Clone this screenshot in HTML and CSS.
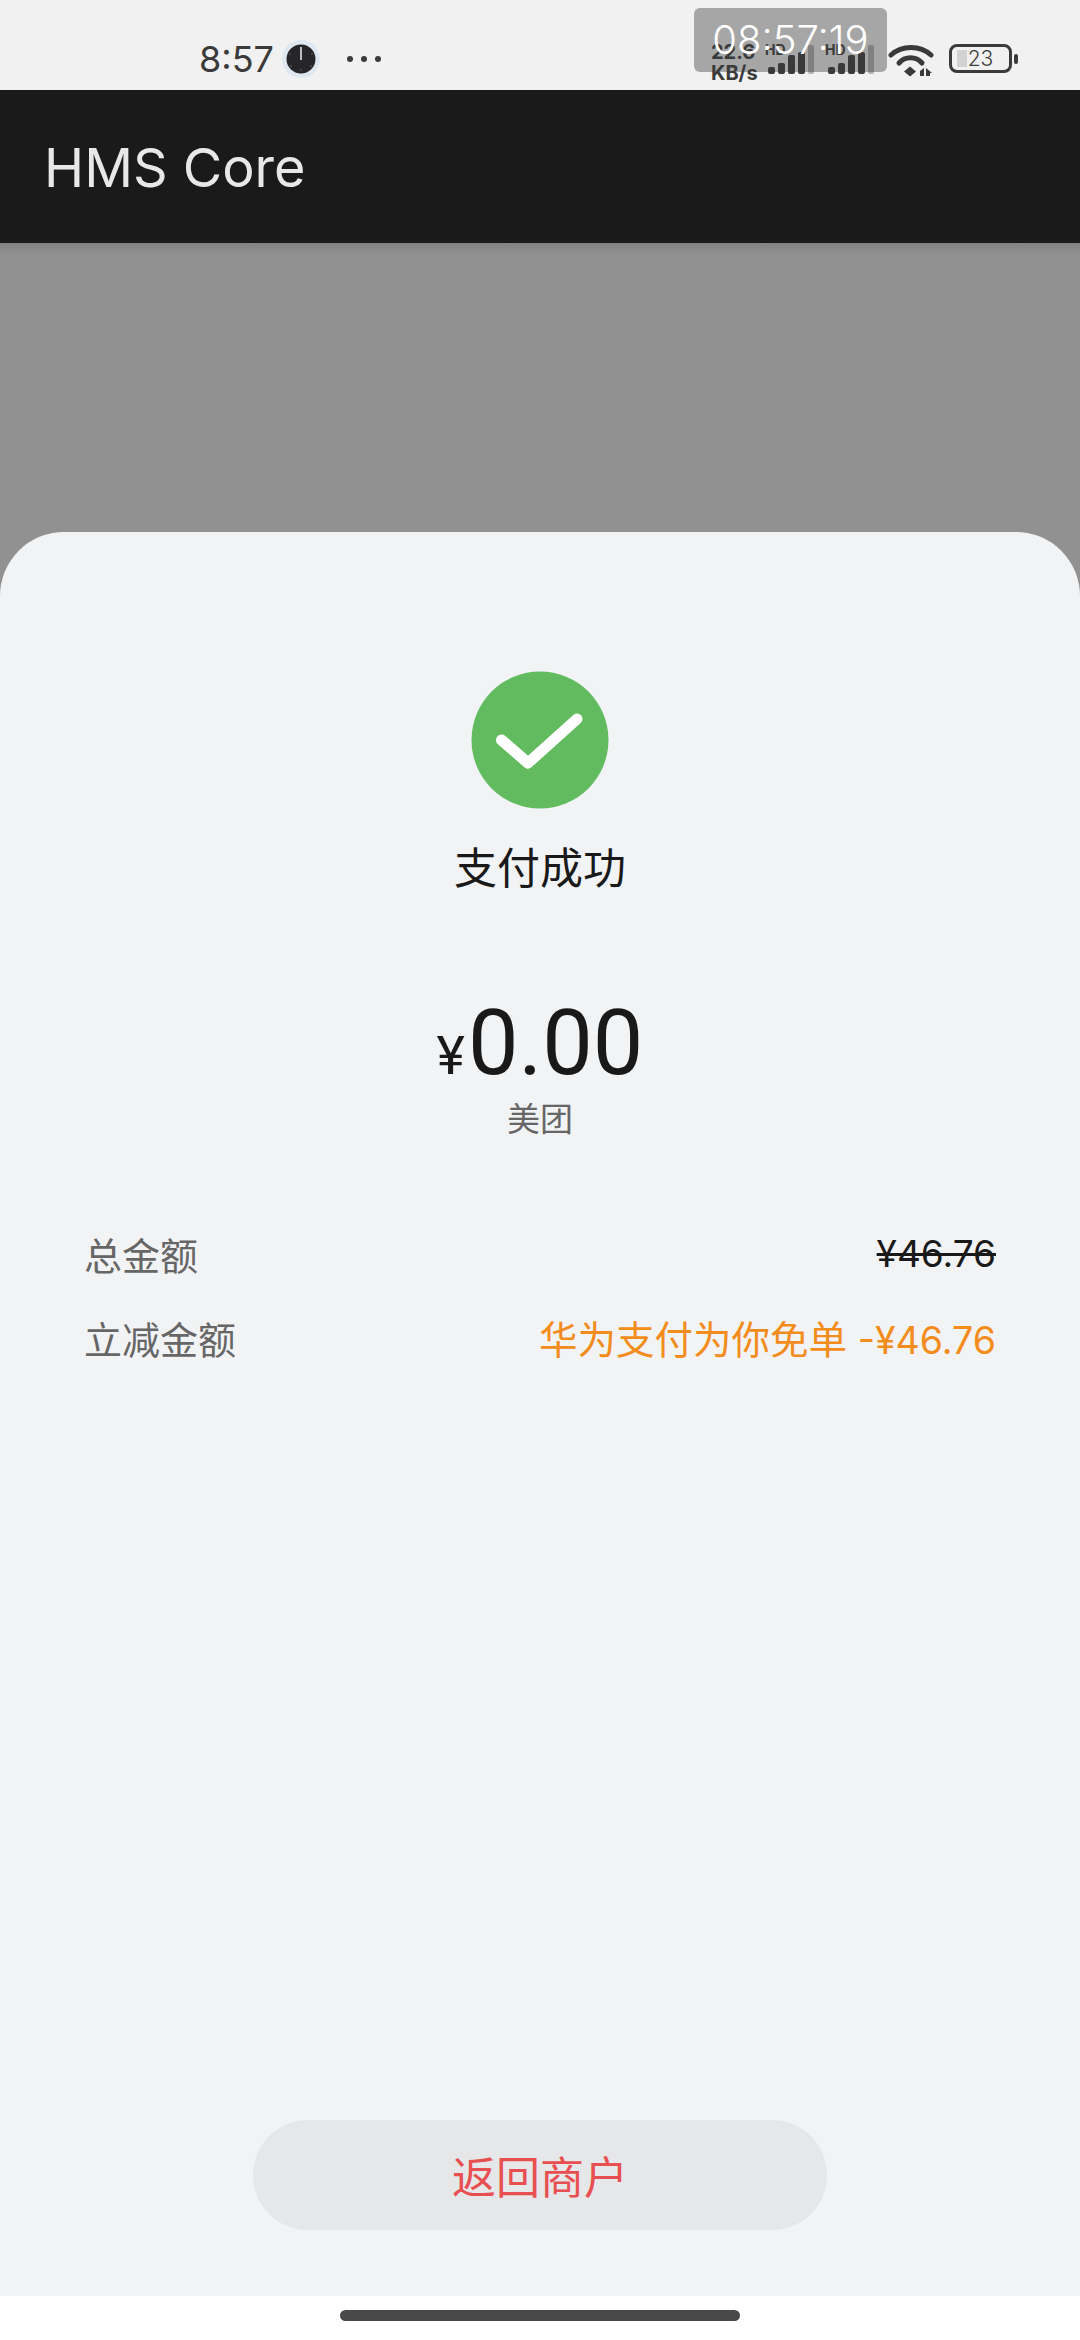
FILE: index.html
```html
<!DOCTYPE html>
<html lang="zh-CN">
<head>
    <meta charset="UTF-8">
    <meta name="viewport" content="width=device-width, initial-scale=1.0">
    <title>HMS Core</title>
    <link rel="stylesheet" href="styles.css">
</head>
<body>
    <div class="screen">
        <!-- Status bar -->
        <div class="status-bar">
            <div class="time-box"></div>
            <div class="status-left">
                <span class="status-time">8:57</span>
                <span class="clock-app">
                    <svg width="38" height="38" viewBox="0 0 38 38">
                        <circle cx="19" cy="19" r="14.5" fill="#26262a"/>
                        <rect x="18" y="7" width="2" height="13" fill="#bdbdbd"/>
                        <circle cx="19" cy="30" r="0.7" fill="#777"/>
                        <circle cx="9" cy="26" r="0.7" fill="#777"/>
                        <circle cx="29" cy="26" r="0.7" fill="#777"/>
                        <circle cx="8" cy="14" r="0.7" fill="#777"/>
                        <circle cx="30" cy="14" r="0.7" fill="#777"/>
                    </svg>
                </span>
                <span class="status-dots"><i></i><i></i><i></i></span>
            </div>
            <div class="status-right">
                <span class="net-speed">22.6<br>KB/s</span>
                <span class="signal">
                    <span class="hd">HD</span>
                    <svg width="46" height="30" viewBox="0 0 46 30">
                        <rect x="0" y="22" width="7" height="7" rx="2" fill="#3a3a3a"/>
                        <rect x="10" y="18" width="7" height="11" rx="2" fill="#3a3a3a"/>
                        <rect x="20" y="10" width="7" height="19" rx="2" fill="#3a3a3a"/>
                        <rect x="30" y="7" width="7" height="22" rx="2" fill="#3a3a3a"/>
                        <rect x="40" y="0" width="6" height="29" rx="2" fill="#3a3a3a" fill-opacity="0.35"/>
                    </svg>
                </span>
                <span class="signal">
                    <span class="hd">HD</span>
                    <svg width="46" height="30" viewBox="0 0 46 30">
                        <rect x="0" y="22" width="7" height="7" rx="2" fill="#3a3a3a"/>
                        <rect x="10" y="18" width="7" height="11" rx="2" fill="#3a3a3a"/>
                        <rect x="20" y="10" width="7" height="19" rx="2" fill="#3a3a3a"/>
                        <rect x="30" y="7" width="7" height="22" rx="2" fill="#3a3a3a"/>
                        <rect x="40" y="0" width="6" height="29" rx="2" fill="#3a3a3a" fill-opacity="0.35"/>
                    </svg>
                </span>
                <svg class="wifi" width="46" height="34" viewBox="0 0 46 34">
                    <path d="M3 12 C14 2 32 2 43 12" fill="none" stroke="#3a3a3a" stroke-width="5" stroke-linecap="round"/>
                    <path d="M11 20 C17 13 28 13 34 20" fill="none" stroke="#3a3a3a" stroke-width="5" stroke-linecap="round"/>
                    <path d="M16 28.5 L22 23.5 L28 28.5 L22 33.5 Z" fill="#3a3a3a"/>
                    <path d="M32 28 L36 25 V33 H32 Z M38 25 L44 30 H42 V33 H38 Z" fill="#3a3a3a"/>
                </svg>
                <span class="battery">
                    <span class="battery-body"><span class="battery-level"></span><span class="battery-num">23</span></span>
                    <span class="battery-tip"></span>
                </span>
            </div>
            <div class="time-text">08:57:19</div>
        </div>

        <!-- App bar -->
        <div class="app-bar">HMS Core</div>

        <div class="scrim"></div>

        <!-- Result sheet -->
        <div class="sheet">
            <div class="result-icon">
                <svg width="138" height="138" viewBox="0 0 138 138">
                    <circle cx="69" cy="69" r="68.5" fill="#62bb5f"/>
                    <path d="M30.5 69 L57 92 L106 48" fill="none" stroke="#fff" stroke-width="11" stroke-linecap="round" stroke-linejoin="round"/>
                </svg>
            </div>
            <div class="result-title">支付成功</div>
            <div class="amount"><span class="currency">¥</span>0.00</div>
            <div class="merchant">美团</div>
            <div class="details">
                <div class="detail-row">
                    <span class="detail-label">总金额</span>
                    <span class="detail-old">¥46.76</span>
                </div>
                <div class="detail-row">
                    <span class="detail-label">立减金额</span>
                    <span class="detail-discount">华为支付为你免单 <span class="detail-num">-¥46.76</span></span>
                </div>
            </div>
            <div class="sheet-footer">
                <button class="back-button">返回商户</button>
            </div>
        </div>

        <div class="nav-bar"><span class="home-indicator"></span></div>
    </div>
</body>
</html>
```

FILE: styles.css
```css
* {
    box-sizing: border-box;
}

body {
    margin: 0;
    padding: 0;
    font-family: "Inter", "Noto Sans CJK SC", sans-serif;
    background-color: #fff;
}

.screen {
    width: 1080px;
    height: 2340px;
    display: flex;
    flex-direction: column;
    overflow: hidden;
}

.status-bar {
    position: relative;
    height: 90px;
    flex: none;
    background-color: #f1f1f1;
    display: flex;
    justify-content: space-between;
    align-items: flex-start;
    padding: 33px 62px 0 199px;
    color: #3a3a3a;
}

.status-left {
    display: flex;
    align-items: center;
    height: 52px;
}

.status-time {
    font-size: 36px;
    font-weight: 400;
    width: 83px;
}

.clock-app {
    width: 38px;
    height: 38px;
    border-radius: 50%;
    background-color: #dfe8f1;
    display: flex;
    align-items: center;
    justify-content: center;
}

.status-dots {
    display: flex;
    gap: 8px;
    margin-left: 27px;
}

.status-dots i {
    width: 6px;
    height: 6px;
    border-radius: 50%;
    background-color: #3a3a3a;
}

.status-right {
    position: relative;
    display: flex;
    align-items: flex-start;
    margin-top: 10px;
}

.net-speed {
    font-size: 20px;
    font-weight: 700;
    line-height: 21px;
    width: 47px;
    margin-right: 10px;
    margin-top: -1px;
    white-space: nowrap;
}

.signal {
    position: relative;
    display: block;
    width: 46px;
    height: 34px;
    margin-right: 14px;
    padding-top: 2px;
}

.signal svg {
    display: block;
}

.hd {
    position: absolute;
    left: -3px;
    top: 0;
    font-size: 14px;
    line-height: 14px;
    font-weight: 700;
}

.wifi {
    margin-right: 15px;
}

.battery {
    display: flex;
    align-items: center;
    margin-top: 1px;
}

.battery-body {
    position: relative;
    width: 63px;
    height: 29px;
    border: 3px solid #3a3a3a;
    border-radius: 8px;
    display: flex;
    align-items: center;
    justify-content: center;
}

.battery-level {
    position: absolute;
    left: 5px;
    top: 3px;
    bottom: 3px;
    width: 10px;
    background-color: #d2d2d2;
}

.battery-num {
    position: relative;
    font-size: 21px;
    font-weight: 300;
}

.battery-tip {
    width: 4px;
    height: 10px;
    margin-left: 2px;
    border-radius: 2px;
    background-color: #3a3a3a;
}

/* recorder timer: grey box under the status icons, white digits over them */
.time-box {
    position: absolute;
    left: 694px;
    top: 8px;
    width: 193px;
    height: 64px;
    border-radius: 6px;
    background-color: #a6a6a6;
}

.time-text {
    position: absolute;
    left: 694px;
    top: 8px;
    width: 193px;
    color: #fff;
    font-size: 40px;
    font-weight: 300;
    line-height: 64px;
    text-align: center;
}

.app-bar {
    height: 153px;
    flex: none;
    background-color: #1a1a1a;
    color: #e8e8e8;
    font-size: 54px;
    line-height: 156px;
    padding-left: 44px;
}

.scrim {
    height: 289px;
    flex: none;
    background: linear-gradient(#828282, #919191 12px);
}

.sheet {
    flex: 1;
    background-color: #f2f3f5;
    border-radius: 64px 64px 0 0;
    padding-top: 139px;
    display: flex;
    flex-direction: column;
    align-items: center;
    box-shadow: 0 -64px 0 0 #919191;
}

.result-icon {
    height: 138px;
}

.result-icon svg {
    display: block;
}

.result-title {
    margin-top: 26px;
    font-size: 43px;
    line-height: 60px;
    color: #191919;
    font-family: "Noto Sans CJK SC", sans-serif;
}

.amount {
    margin-top: 105px;
    font-family: "Roboto", sans-serif;
    font-size: 90px;
    line-height: 88px;
    font-weight: 400;
    color: #191919;
    display: flex;
    align-items: baseline;
}

.currency {
    font-size: 54px;
    margin-right: 3px;
}

.merchant {
    margin-top: -4px;
    font-size: 33px;
    line-height: 42px;
    color: #666;
    font-family: "Noto Sans CJK SC", sans-serif;
}

.details {
    width: 100%;
    padding: 0 84px;
    margin-top: 73px;
}

.detail-row {
    display: flex;
    justify-content: space-between;
    align-items: center;
    height: 84px;
    font-size: 38px;
}

.detail-label {
    color: #666;
    font-family: "Noto Sans CJK SC", sans-serif;
}

.detail-old {
    color: #191919;
    font-size: 37px;
    text-decoration: line-through;
}

.detail-discount {
    color: #f28c1c;
    font-size: 38.5px;
}

.detail-num {
    font-size: 37.5px;
}

.sheet-footer {
    margin-top: auto;
    padding-bottom: 66px;
}

.back-button {
    display: block;
    width: 574px;
    height: 110px;
    border: none;
    border-radius: 55px;
    background-color: #e6e7e9;
    color: #e84f50;
    font-family: "Noto Sans CJK SC", sans-serif;
    font-size: 44px;
}

.nav-bar {
    height: 44px;
    flex: none;
    background-color: #fff;
    padding-top: 14px;
    display: flex;
    justify-content: center;
}

.home-indicator {
    width: 400px;
    height: 11px;
    border-radius: 6px;
    background-color: #484848;
}
```
